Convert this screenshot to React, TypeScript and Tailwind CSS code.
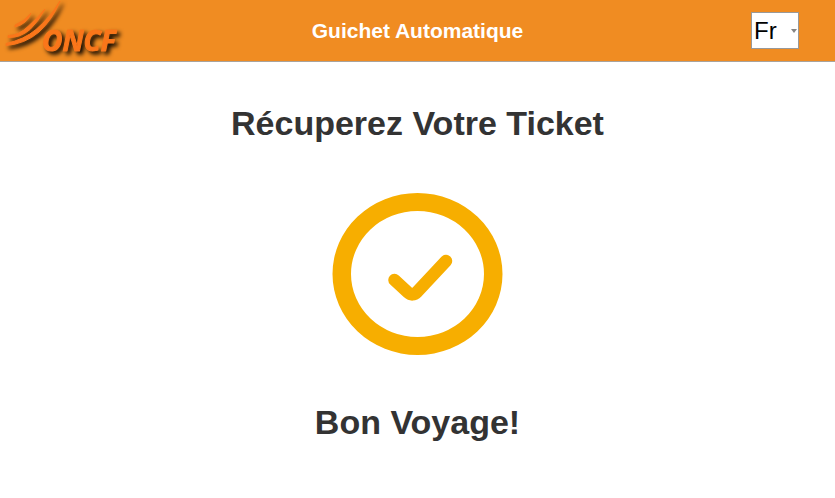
import { useState } from "react";

function Logo() {
  return (
    <svg width="130" height="61" viewBox="0 0 130 61" role="img" aria-label="ONCF" className="block">
      <defs>
        <filter id="logo-shadow" filterUnits="userSpaceOnUse" x="0" y="0" width="130" height="61" colorInterpolationFilters="sRGB">
          <feDropShadow dx="3" dy="3" stdDeviation="2" floodColor="#000" floodOpacity="0.95" />
        </filter>
      </defs>
      <g fill="#fa761a" stroke="#fa761a" strokeWidth="1" strokeLinejoin="round" filter="url(#logo-shadow)">
        <path d="M15 25Q25 21 31 13Q27 24 15 27Z" />
        <path d="M8 35.500Q19 35.500 28 26.500Q37 18.500 45 9Q38 22 30 29.500Q20 38 8 37.500Z" />
        <path d="M6 43.500Q24 39.500 36 29.500Q50 17.500 60 1Q53 19 39 32Q25 44 6 45.500Z" />
        <text
          x="42"
          y="51"
          fontSize="28"
          fontWeight="700"
          fontStyle="italic"
          fontFamily="'Open Sans', sans-serif"
        >
          ONCF
        </text>
      </g>
    </svg>
  );
}

function SuccessMark() {
  return (
    <svg width="172" height="164" viewBox="0 0 172 164" fill="none" stroke="#f7ae00" aria-hidden="true" className="block">
      <path
        fill="#f7ae00"
        stroke="none"
        fillRule="evenodd"
        d="M85.500 1A85 81 0 1 1 85.500 163A85 81 0 1 1 85.500 1ZM85.500 19A66.500 63 0 1 0 85.500 145A66.500 63 0 1 0 85.500 19Z"
      />
      <path d="M62.500 88L76 100.500Q80.500 104.500 85 100L114 69" strokeWidth="12.500" strokeLinecap="round" strokeLinejoin="round" />
    </svg>
  );
}

export default function App() {
  const [language, setLanguage] = useState("fr");

  return (
    <div className="min-h-screen bg-white font-['Liberation_Sans',Arial,sans-serif] text-[#333333]">
      <header className="grid grid-cols-[1fr_auto_1fr] items-center border-b border-[#a9a39c] bg-[#f08c22]">
        <Logo />
        <h1 className="text-[21px] leading-6 font-bold text-white">Guichet Automatique</h1>
        <div className="relative mr-9 justify-self-end">
          <select
            aria-label="Langue"
            value={language}
            onChange={(event) => setLanguage(event.target.value)}
            className="block h-[37px] w-12 appearance-none border border-[#999999] bg-white pl-0.5 text-2xl leading-8 text-black"
          >
            <option value="fr">Fr</option>
            <option value="en">En</option>
            <option value="ar">Ar</option>
          </select>
          <svg width="6" height="4" viewBox="0 0 6 4" aria-hidden="true" className="pointer-events-none absolute top-[17px] right-0.5">
            <path d="M0 0H6L3 4Z" fill="#858585" />
          </svg>
        </div>
      </header>
      <main className="flex flex-col items-center gap-12 px-4 pt-10 pb-8 text-center">
        <h2 className="text-[34px] leading-[42px] font-bold">Récuperez Votre Ticket</h2>
        <SuccessMark />
        <p className="text-[34px] leading-9 font-bold">Bon Voyage!</p>
      </main>
    </div>
  );
}
